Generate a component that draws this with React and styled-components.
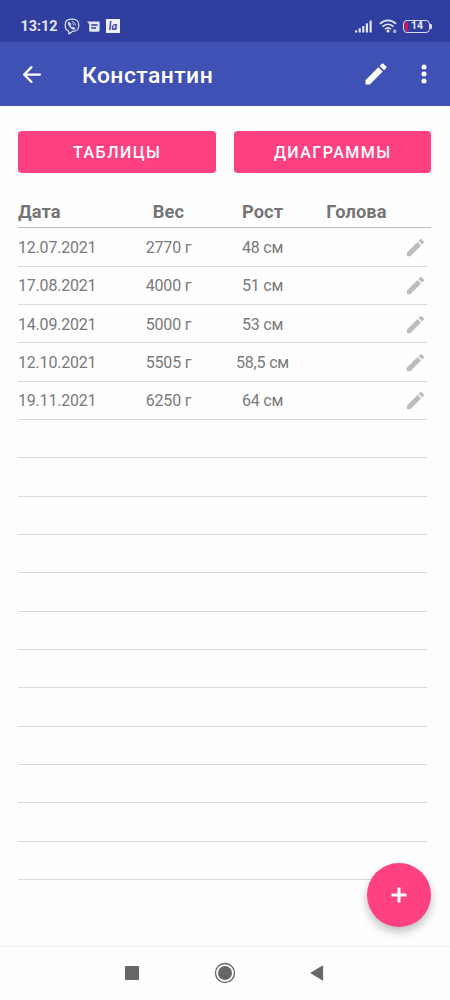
import React from "react";
import styled, { createGlobalStyle } from "styled-components";

const measurements = [
  { date: "12.07.2021", weight: "2770 г", height: "48 см" },
  { date: "17.08.2021", weight: "4000 г", height: "51 см" },
  { date: "14.09.2021", weight: "5000 г", height: "53 см" },
  { date: "12.10.2021", weight: "5505 г", height: "58,5 см" },
  { date: "19.11.2021", weight: "6250 г", height: "64 см" },
];

const TOTAL_ROWS = 17;

const PencilIcon = ({ size }) => (
  <svg width={size} height={size} viewBox="0 0 24 24" fill="currentColor">
    <path d="M3 17.460v3.040c0 .28.22.5.5.5h3.040c.13 0 .26-.05.35-.15L17.810 9.940l-3.750-3.750L3.150 17.100c-.1.100-.15.220-.15.360zM20.710 7.040a1 1 0 0 0 0-1.410l-2.340-2.340a1 1 0 0 0-1.410 0l-1.830 1.830 3.750 3.750 1.830-1.830z" />
  </svg>
);

const BackIcon = () => (
  <svg width="27" height="27" viewBox="0 0 24 24" fill="currentColor">
    <path d="M19.500 11H7.830l4.880-4.880c.39-.39.39-1.030 0-1.420a1 1 0 0 0-1.410 0l-6.590 6.590a1 1 0 0 0 0 1.410l6.590 6.590a1 1 0 0 0 1.410-1.410L7.830 13H19.500c.55 0 1-.45 1-1s-.45-1-1-1z" />
  </svg>
);

const MoreIcon = () => (
  <svg width="8" height="24" viewBox="0 0 8 24" fill="currentColor">
    <circle cx="4" cy="5" r="2.500" />
    <circle cx="4" cy="12" r="2.500" />
    <circle cx="4" cy="19" r="2.500" />
  </svg>
);

const ViberIcon = () => (
  <svg width="16" height="17" viewBox="0 0 16 17" fill="none" stroke="currentColor" strokeLinecap="round" strokeLinejoin="round">
    <path d="M4.600 13C2.100 12.400 1.200 10.900 1.200 7.300 1.200 2.800 2.900 1.200 8 1.200s6.800 1.600 6.800 6.100-1.700 6.100-6.500 6.100L5 15.900z" strokeWidth="1.200" />
    <path d="M4.900 4.300c-.9.700-.8 1.400.1 3 1.100 1.900 2.300 3 4.100 3.900.9.400 1.500.1 1.900-.8l-1.800-1.300-.9.700C7 9.200 6.400 8.500 6 7.300l.7-.8z" fill="currentColor" strokeWidth=".9" />
    <path d="M8.300 3.700c2 .1 3.100 1.300 3.200 3.300M8.500 5.500c.8.100 1.200.6 1.300 1.400" strokeWidth=".8" />
  </svg>
);

const MessageIcon = () => (
  <svg width="13" height="12" viewBox="0 0 13 12">
    <path d="M0 .5h11.500c.7 0 1.100.4 1.100 1.100v8c0 .7-.4 1.100-1.100 1.100H3.300c-.7 0-1.100-.4-1.100-1.100V3z" fill="currentColor" />
    <path d="M4.200 4h6.400M4.200 7h4.800" stroke="#303f9f" strokeWidth="1.300" />
  </svg>
);

const SignalIcon = () => (
  <svg width="18" height="13" viewBox="0 0 18 13" fill="currentColor">
    <rect x="0" y="10.200" width="2.200" height="2.300" rx=".5" />
    <rect x="3.600" y="8.300" width="2.200" height="4.200" rx=".5" />
    <rect x="7.200" y="6" width="2.200" height="6.500" rx=".5" />
    <rect x="10.800" y="3.300" width="2.200" height="9.200" rx=".5" />
    <rect x="14.500" y="0.500" width="2.200" height="12" rx=".5" />
  </svg>
);

const WifiIcon = () => (
  <svg width="19" height="15" viewBox="0 0 19 15" fill="none" stroke="currentColor" strokeWidth="1.800">
    <path d="M1 4.900c4.800-4.600 11.200-4.600 16 0M3.500 7.600c3.300-3.100 7.700-3.100 11 0M6 10.100c1.900-1.600 4.100-1.600 6 0" />
    <circle cx="9" cy="12" r="1.500" fill="currentColor" stroke="none" />
    <rect x="14" y="10.500" width="3.400" height="3.400" rx="1" fill="currentColor" stroke="none" opacity=".65" />
  </svg>
);

const PlusIcon = () => (
  <svg width="16" height="16" viewBox="0 0 16 16" stroke="currentColor" strokeWidth="3">
    <path d="M8 .5v15M.5 8h15" />
  </svg>
);

const App = () => {
  const rows = Array.from({ length: TOTAL_ROWS }, (_, i) => measurements[i]);

  return (
    <>
      <GlobalStyle />
      <Screen>
        <StatusBar>
          <Clock>13:12</Clock>
          <Notifications>
            <ViberIcon />
            <MessageIcon />
            <AppBadge>la</AppBadge>
          </Notifications>
          <SignalIcon />
          <WifiSlot>
            <WifiIcon />
          </WifiSlot>
          <Battery>
            <span>14</span>
          </Battery>
        </StatusBar>

        <Toolbar>
          <IconButton aria-label="Назад">
            <BackIcon />
          </IconButton>
          <Title>Константин</Title>
          <IconButton aria-label="Изменить">
            <PencilIcon size={28} />
          </IconButton>
          <MenuButton aria-label="Меню">
            <MoreIcon />
          </MenuButton>
        </Toolbar>

        <Content>
          <Actions>
            <ActionButton>Таблицы</ActionButton>
            <ActionButton>Диаграммы</ActionButton>
          </Actions>

          <TableHead>
            <span>Дата</span>
            <span>Вес</span>
            <span>Рост</span>
            <span>Голова</span>
          </TableHead>
          {rows.map((row, i) => (
            <Row key={i}>
              {row && (
                <>
                  <span>{row.date}</span>
                  <span>{row.weight}</span>
                  <span>{row.height}</span>
                  <span />
                  <EditButton aria-label="Изменить запись">
                    <PencilIcon size={23} />
                  </EditButton>
                </>
              )}
            </Row>
          ))}
          <AddButton aria-label="Добавить">
            <PlusIcon />
          </AddButton>
        </Content>

        <NavBar>
          <svg width="14" height="14" viewBox="0 0 14 14">
            <rect width="14" height="14" rx=".8" fill="#666" />
          </svg>
          <svg width="22" height="22" viewBox="0 0 22 22">
            <circle cx="11" cy="11" r="9.500" fill="none" stroke="#666" strokeWidth="1.300" />
            <circle cx="11" cy="11" r="7" fill="#666" />
          </svg>
          <svg width="14" height="16" viewBox="0 0 14 16">
            <path d="M12.700.8v14.400L.8 8z" fill="#666" stroke="#666" strokeWidth=".8" strokeLinejoin="round" />
          </svg>
        </NavBar>
      </Screen>
    </>
  );
};

const GlobalStyle = createGlobalStyle`
  * {
    box-sizing: border-box;
  }

  body {
    margin: 0;
    background: #fefefe;
    font-family: Roboto, "Liberation Sans", sans-serif;
  }

  button {
    padding: 0;
    border: none;
    background: none;
    font-family: inherit;
    cursor: pointer;
  }

  svg {
    display: block;
    flex-shrink: 0;
  }
`;

const Screen = styled.div`
  display: flex;
  flex-direction: column;
  width: 450px;
  height: 1000px;
  overflow: hidden;
`;

const StatusBar = styled.div`
  display: flex;
  align-items: center;
  height: 42px;
  padding: 11px 17px 0 20.5px;
  background: #303f9f;
  color: #e3e6fa;
`;

const Clock = styled.div`
  width: 43.5px;
  font-size: 14.4px;
  font-weight: 700;
`;

const Notifications = styled.div`
  display: flex;
  flex: 1;
  align-items: center;
  gap: 7px;
`;

const AppBadge = styled.div`
  width: 14px;
  height: 14px;
  margin: 0 0 1px -1px;
  background: #f0f0fd;
  color: #303f9f;
  font-family: Lato, Roboto, sans-serif;
  font-size: 11px;
  font-style: italic;
  font-weight: 700;
  line-height: 13px;
  text-align: center;
`;

const WifiSlot = styled.div`
  margin: 0 5px 0 6px;
`;

const Battery = styled.div`
  position: relative;
  display: flex;
  align-items: center;
  justify-content: center;
  width: 27px;
  height: 13px;
  margin-right: 3px;
  border: 1.5px solid #d9dcf5;
  border-radius: 4px;
  background: linear-gradient(to right, #e5123c 3px, transparent 3px);
  background-origin: content-box;
  background-clip: content-box;
  padding: 1px;
  font-size: 10.5px;
  font-weight: 700;
  line-height: 1;

  span {
    padding-left: 1px;
  }

  &::after {
    content: "";
    position: absolute;
    right: -3px;
    top: 3px;
    width: 2px;
    height: 5px;
    border-radius: 0 1px 1px 0;
    background: #d9dcf5;
  }
`;

const Toolbar = styled.header`
  display: flex;
  align-items: center;
  height: 64px;
  padding: 0 22px 0 18px;
  background: #3f51b5;
  color: #fff;
`;

const IconButton = styled.button`
  color: inherit;
`;

const MenuButton = styled(IconButton)`
  margin-left: 30px;
`;

const Title = styled.h1`
  flex: 1;
  margin: 3px 0 0 37px;
  font-size: 22.9px;
  font-weight: 500;
  letter-spacing: 0.46px;
  line-height: 27px;
`;

const Content = styled.main`
  position: relative;
  flex: 1;
  padding: 25px 19px 0 18px;
`;

const Actions = styled.div`
  display: grid;
  grid-template-columns: 1fr 1fr;
  gap: 18px;
`;

const ActionButton = styled.button`
  height: 42px;
  padding: 1px 0 0 1px;
  border-radius: 4px;
  background: #ff4081;
  color: #fff;
  font-size: 16px;
  font-weight: 500;
  letter-spacing: 1.48px;
  text-transform: uppercase;
`;

const TableHead = styled.div`
  display: grid;
  grid-template-columns: 103.5px repeat(3, 94px);
  align-items: center;
  height: 55.4px;
  padding-top: 22px;
  border-bottom: 1px solid #bdbdbd;
  color: #757575;
  font-size: 18.3px;
  font-weight: 700;
  letter-spacing: 0.1px;
  text-align: center;

  span:first-child {
    text-align: left;
  }
`;

const Row = styled.div`
  display: grid;
  grid-template-columns: 103.5px repeat(3, 94px) 1fr;
  align-items: center;
  height: 38.34px;
  padding-top: 1px;
  margin-right: 4px;
  border-bottom: 1px solid #d9d9d9;
  color: #7a7a7a;
  font-size: 16px;
  letter-spacing: -0.2px;
  text-align: center;

  span:first-child {
    text-align: left;
  }
`;

const EditButton = styled.button`
  padding-right: 1px;
  color: #bdbdbd;
`;

const AddButton = styled.button`
  position: absolute;
  right: 19px;
  bottom: 18px;
  display: flex;
  align-items: center;
  justify-content: center;
  width: 64px;
  height: 64px;
  border-radius: 50%;
  background: #ff4081;
  box-shadow: 0 5px 10px rgba(0, 0, 0, 0.25);
  color: #fff;
`;

const NavBar = styled.nav`
  display: flex;
  align-items: center;
  justify-content: space-between;
  height: 55px;
  padding: 0 126px 2px 125px;
  border-top: 2px solid #f5f5f5;
`;

export default App;
